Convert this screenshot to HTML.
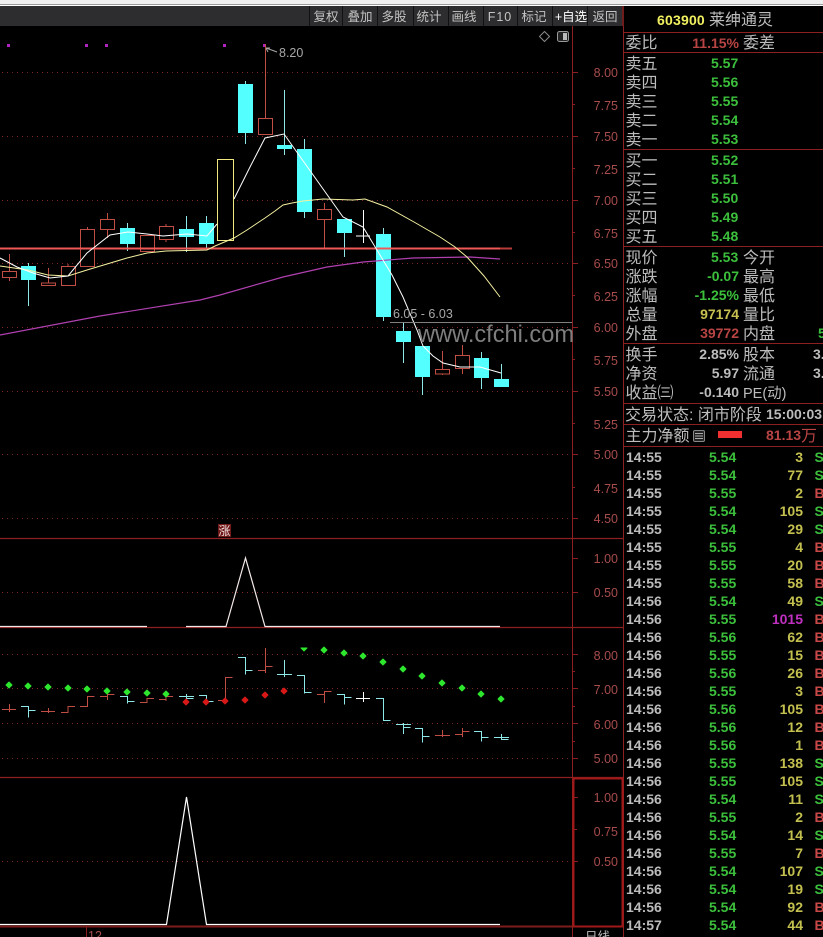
<!DOCTYPE html>
<html><head><meta charset="utf-8"><style>
html,body{margin:0;padding:0;background:#000;width:823px;height:937px;overflow:hidden}
svg{display:block}
text{font-family:"Liberation Sans","WenQuanYi Zen Hei","Noto Sans CJK SC",sans-serif}
.c{font-size:16px;fill:#bdbdbd}
.t{font-size:14px;fill:#c4c4c4;text-anchor:middle}
.ax{font-size:12.5px;fill:#a84c4c;text-anchor:end}
.g{font-size:14px;font-weight:bold;fill:#3cc03c}
.w{font-size:14px;font-weight:bold;fill:#bcbcbc}
.y{font-size:14px;font-weight:bold;fill:#c4c050;text-anchor:end}
.r{font-size:14px;font-weight:bold;fill:#b84444}
.s{font-size:14px;font-weight:bold;fill:#3cc03c}
.b{font-size:14px;font-weight:bold;fill:#c84848}
.dot{stroke:#7a2626;stroke-width:1;stroke-dasharray:1 4;fill:none}
.cy{fill:#54ffff}
.cw{stroke:#8fe8e8;stroke-width:1;fill:none}
.rb{fill:#000;stroke:#c04e44;stroke-width:1}
.rw{stroke:#c04e44;stroke-width:1;fill:none}
.ln{stroke:#8c2020;stroke-width:1;fill:none}
.bc{stroke:#8fe8e8;stroke-width:1;fill:none}
.br{stroke:#c04e44;stroke-width:1;fill:none}
</style></head><body>
<svg width="823" height="937" viewBox="0 0 823 937" xmlns="http://www.w3.org/2000/svg">
<rect width="823" height="937" fill="#000"/>
<rect width="823" height="4" fill="#efefef"/>
<rect y="4" width="823" height="1" fill="#9a9a9a"/>
<rect y="5" width="823" height="1" fill="#fff"/>
<rect y="6" width="623" height="20" fill="#2d2d2f"/>
<g fill="#111"><rect x="309" y="6" width="1" height="20"/><rect x="342" y="6" width="1" height="20"/><rect x="377" y="6" width="1" height="20"/><rect x="413" y="6" width="1" height="20"/><rect x="448" y="6" width="1" height="20"/><rect x="483" y="6" width="1" height="20"/><rect x="517" y="6" width="1" height="20"/><rect x="552" y="6" width="1" height="20"/><rect x="587" y="6" width="1" height="20"/></g>
<rect x="622" y="6" width="2" height="20" fill="#6e1c1c"/>
<g>
<text class="t" x="326" y="21" style="font-size:12.5px">复权</text>
<text class="t" x="360" y="21" style="font-size:12.5px">叠加</text>
<text class="t" x="394" y="21" style="font-size:12.5px">多股</text>
<text class="t" x="429" y="21" style="font-size:12.5px">统计</text>
<text class="t" x="464" y="21" style="font-size:12.5px">画线</text>
<text class="t" x="500" y="21" style="font-size:12.5px;letter-spacing:1px">F10</text>
<text class="t" x="534" y="21" style="font-size:12.5px">标记</text>
<text class="t" x="571" y="21" style="font-size:12.5px;fill:#fff">+自选</text>
<text class="t" x="605" y="21" style="font-size:12.5px">返回</text>
</g>
<!-- grid -->
<g class="dot">
<path d="M2 72.5H572M2 136.5H572M2 200.5H572M2 263.5H572M2 327.5H572M2 391.5H572M2 454.5H572M2 518.5H572"/>
<path d="M2 592.5H572"/>
<path d="M2 654.5H572M2 688.5H572M2 723.5H572M2 758.5H572"/>
<path d="M2 861.5H572"/>
</g>
<!-- axes -->
<path d="M572.5 26V937M623.5 26V937" stroke="#8c2020" stroke-width="1" fill="none"/>
<path d="M0 538.5H623M0 627.5H623M0 777.5H623" stroke="#8c2020" stroke-width="1.3"/>
<path d="M0 926.5H573" stroke="#7e1c1c" stroke-width="2"/>
<rect x="573.5" y="778.5" width="49" height="148" fill="none" stroke="#a01818" stroke-width="2"/>
<g stroke="#8c2020" stroke-width="1"><path d="M572 72.5h6M572 104.5h3M572 136.5h6M572 168.5h3M572 200.5h6M572 232.5h3M572 263.5h6M572 295.5h3M572 327.5h6M572 359.5h3M572 391.5h6M572 423.5h3M572 454.5h6M572 487.5h3M572 518.5h6M572 558.5h6M572 592.5h6M572 654.5h6M572 671.5h3M572 688.5h6M572 706.5h3M572 723.5h6M572 741.5h3M572 758.5h6M574 797.5h4M574 829.5h3M574 861.5h4"/></g>
<g>
<text class="ax" x="618" y="77">8.00</text><text class="ax" x="618" y="110">7.75</text><text class="ax" x="618" y="141">7.50</text><text class="ax" x="618" y="174">7.25</text><text class="ax" x="618" y="205">7.00</text><text class="ax" x="618" y="238">6.75</text><text class="ax" x="618" y="268">6.50</text><text class="ax" x="618" y="301">6.25</text><text class="ax" x="618" y="332">6.00</text><text class="ax" x="618" y="365">5.75</text><text class="ax" x="618" y="396">5.50</text><text class="ax" x="618" y="429">5.25</text><text class="ax" x="618" y="459">5.00</text><text class="ax" x="618" y="493">4.75</text><text class="ax" x="618" y="523">4.50</text>
<text class="ax" x="618" y="563">1.00</text><text class="ax" x="618" y="597">0.50</text>
<text class="ax" x="618" y="660">8.00</text><text class="ax" x="618" y="694">7.00</text><text class="ax" x="618" y="729">6.00</text><text class="ax" x="618" y="763">5.00</text>
<text class="ax" x="618" y="802">1.00</text><text class="ax" x="618" y="836">0.75</text><text class="ax" x="618" y="866">0.50</text>
</g>
<!-- top right icons -->
<path d="M544.5 31.5l5 5-5 5-5-5z" fill="none" stroke="#8a8a8a"/>
<rect x="557.5" y="31.5" width="11" height="10" rx="2" fill="#222" stroke="#9a9a9a"/><rect x="563" y="33" width="4" height="7" fill="#bbb"/>
<!-- magenta markers -->
<g fill="#b024c0"><rect x="7" y="44" width="3" height="3"/><rect x="85" y="44" width="3" height="3"/><rect x="105" y="44" width="3" height="3"/><rect x="223" y="44" width="3" height="3"/><rect x="263" y="44" width="3" height="3"/></g>
<path d="M266 48l11 4M266 48l4 0M266 48l2 4" stroke="#a8a8a8" fill="none"/>
<text x="279" y="57" style="font-size:12.5px;fill:#a8a8a8">8.20</text>
<!-- red level line + candles -->
<g class="cw">
<path d="M28.5 263V306M127.5 223V251M186.5 216V252M206.5 216V248M245.5 81V144M284.5 90V155M304.5 139V218M344.5 233V257M383.5 228V321M403.5 322V363M422.5 377V395M481.5 352V389M501.5 364V379"/>
</g>
<g class="rw">
<path d="M9.5 254V281M48.5 268V286M68 264V266M87.5 227V229M107.5 213V238M147 251V252M166 224V242M265.5 44V118M324.5 203V248M442.5 351V375M462.5 345V374"/>
</g>
<g class="rb">
<rect x="2.5" y="271.5" width="14" height="6"/><rect x="41.5" y="283" width="14" height="2.5"/><rect x="61.5" y="266.5" width="14" height="19"/><rect x="80.5" y="229.5" width="14" height="37"/><rect x="100.5" y="219.5" width="14" height="10"/><rect x="140.5" y="235.5" width="14" height="16"/><rect x="159.5" y="226.5" width="14" height="13"/><rect x="258.5" y="118.5" width="14" height="16"/><rect x="317.5" y="209.5" width="14" height="10"/><rect x="435.5" y="369.5" width="14" height="4.5"/><rect x="455.5" y="355.5" width="14" height="13"/>
</g>
<rect x="217.5" y="159.5" width="16" height="81" fill="#000" stroke="#f0e880"/>
<g class="cy">
<rect x="21" y="266" width="15" height="14"/><rect x="120" y="228" width="15" height="16"/><rect x="179" y="229" width="15" height="8"/><rect x="199" y="223" width="15" height="21"/><rect x="238" y="84" width="15" height="49"/><rect x="277" y="145" width="15" height="4"/><rect x="297" y="149" width="15" height="63"/><rect x="337" y="219" width="15" height="14"/><rect x="376" y="234" width="15" height="83"/><rect x="396" y="331" width="15" height="11"/><rect x="415" y="346" width="15" height="31"/><rect x="474" y="358" width="15" height="20"/><rect x="494" y="379" width="15" height="8"/>
</g>
<path d="M356 236h14M363.5 210V243" stroke="#fff" fill="none"/>
<path d="M0 248.5H500" stroke="#f05858" stroke-width="2"/><path d="M500 248.5H512" stroke="#b83a3a" stroke-width="2"/>
<!-- MAs -->
<path d="M0 335L100 316L200 300L220 295L283 277L327 267L363 262L413 258L470 257L500 259" fill="none" stroke="#b040b0" stroke-width="1.2"/>
<path d="M0 266L28 270L48 275L68 276L87 270L127 258L147 253L166 251L207 250L215 246L234 238L247 230L265 218L275 211L283 205L292 203L303 201L323 199L353 200L365 199L387 207L414 222L440 237L455 247L467 257L484 276L500 297" fill="none" stroke="#f4f0a0" stroke-width="1"/>
<path d="M0 258L17 267L33 273L50 278L68 276L87 253L110 235L128 232L147 234L163 236L187 234L207 236L217 224M234 199L250 167L265 138L284 134L343 217L363 227L377 250L392 275L403 297L417 330L423 346L433 356L443 363L460 367L480 367L501 373" fill="none" stroke="#fff" stroke-width="1"/>
<!-- range annotation -->
<path d="M390 322.5H572" stroke="#808080"/>
<text x="393" y="318" style="font-size:12.5px;fill:#a8a8a8">6.05 - 6.03</text>
<text x="418" y="342" style="font-size:23.6px;fill:#7e7e7e">www.cfchi.com</text>
<!-- zhang marker -->
<rect x="218" y="524" width="13" height="13" fill="#701818"/>
<text x="224.5" y="535" style="font-size:12px;fill:#f0e0e0;text-anchor:middle">涨</text>
<!-- pane 2 -->
<path d="M0 626.5H147M186 626.5H226L245.5 558L265 626.5H500" fill="none" stroke="#f4e8e8" stroke-width="1.2"/>
<!-- pane 3 bars -->
<g class="br">
<path d="M2 709.5h14M9.5 704v8M41 711.5h14M48.5 708v5M61 712.5h7v-6h7M80 706.5h7.5v-10h7M100 696.5h7.5v-2h7M107.5 694v6M140 702.5h7v-4h7M147 698v5M159 699.5h7v-3h7M166 696v5M218 700.5h7.5v-23h7M258 670.5h7.5M265.5 648v25M265.5 666.5h7M317 694.5h7.5M324.5 691v12M324.5 691.5h7M435 735.5h15M442.5 730v7M455 734.5h7.5M462.5 728v9M462.5 731.5h7"/>
</g>
<g class="bc">
<path d="M21 706.5h7.5v11M28.5 710.5h7M120 696.5h7.5v7M127.5 701.5h7M179 696.5h15M186.5 694v5M186.5 698.5h7M199 695.5h7.5v8M206.5 701.5h7M238 657.5h7.5v17M245.5 670.5h7M277 674.5h15M284.5 660v17M297 675.5h7.5v18M304.5 692.5h7M337 694.5h7.5v10M344.5 697.5h7M376 698.5h7.5v22h7M396 724.5h15M403.5 723v11M403.5 727.5h7M415 728.5h7.5v14M422.5 736.5h7M474 731.5h7.5v10M481.5 737.5h7M494 737.5h15M501.5 734v5.5h7"/>
</g>
<path d="M356 698.5h14M363.5 692v10" stroke="#fff" fill="none"/>
<g fill="#2ee62e" stroke="#2ee62e" stroke-width="1" stroke-linejoin="round">
<path d="M9 682l3 3-3 3-3-3zM28 683l3 3-3 3-3-3zM48 684l3 3-3 3-3-3zM68 685l3 3-3 3-3-3zM87 686l3 3-3 3-3-3zM107 688l3 3-3 3-3-3zM127 689l3 3-3 3-3-3zM147 690l3 3-3 3-3-3zM166 691l3 3-3 3-3-3z"/>
<path d="M301 648h6l-3 3zM324 647l3 3-3 3-3-3zM344 650l3 3-3 3-3-3zM363 653l3 3-3 3-3-3zM383 659l3 3-3 3-3-3zM403 666l3 3-3 3-3-3zM422 673l3 3-3 3-3-3zM442 680l3 3-3 3-3-3zM462 685l3 3-3 3-3-3zM481 691l3 3-3 3-3-3zM501 696l3 3-3 3-3-3z"/>
</g>
<g fill="#d81818" stroke="#d81818" stroke-width="1" stroke-linejoin="round">
<path d="M186 699l3 3-3 3-3-3zM206 699l3 3-3 3-3-3zM225 698l3 3-3 3-3-3zM245 697l3 3-3 3-3-3zM265 692l3 3-3 3-3-3zM284 688l3 3-3 3-3-3z"/>
</g>
<!-- pane 4 -->
<path d="M0 924.5H166.5L186.5 797L206.5 924.5H500" fill="none" stroke="#fff" stroke-width="1.2"/>
<path d="M86.5 927V937" stroke="#8c1c1c"/>
<text x="88" y="940" style="font-size:12.5px;fill:#a84c4c">12</text>
<text x="585" y="941" style="font-size:12.5px;fill:#bdbdbd">日线</text>
<!-- right panel lines -->
<g class="ln"><path d="M624 32.5H823M624 52.5H823M624 149.5H823M624 246.5H823M624 343.5H823M624 403.5H823M624 424.5H823M624 446.5H823"/></g>
<text x="657" y="25" style="font-size:14px;font-weight:bold;fill:#f0f060;letter-spacing:.2px">603900</text>
<text x="709" y="25" class="c">莱绅通灵</text>
<text x="625.5" y="48" class="c">委比</text>
<text x="739" y="48" class="r" style="text-anchor:end">11.15%</text>
<text x="743" y="48" class="c">委差</text>
<g class="c">
<text x="625.5" y="69">卖五</text><text x="625.5" y="88">卖四</text><text x="625.5" y="107">卖三</text><text x="625.5" y="126">卖二</text><text x="625.5" y="145">卖一</text>
<text x="625.5" y="166">买一</text><text x="625.5" y="185">买二</text><text x="625.5" y="204">买三</text><text x="625.5" y="223">买四</text><text x="625.5" y="242">买五</text>
<text x="625.5" y="263">现价</text><text x="625.5" y="282">涨跌</text><text x="625.5" y="301">涨幅</text><text x="625.5" y="320">总量</text><text x="625.5" y="339">外盘</text>
<text x="743" y="263">今开</text><text x="743" y="282">最高</text><text x="743" y="301">最低</text><text x="743" y="320">量比</text><text x="743" y="339">内盘</text>
<text x="625.5" y="360">换手</text><text x="625.5" y="379">净资</text><text x="625.5" y="398">收益㈢</text>
<text x="743" y="360">股本</text><text x="743" y="379">流通</text><text x="743" y="398" style="font-size:14.5px">PE(动)</text>
<text x="625" y="420">交易状态: 闭市阶段</text>
<text x="625.5" y="441">主力净额</text>
</g>
<g class="g">
<text x="711" y="68">5.57</text><text x="711" y="87">5.56</text><text x="711" y="106">5.55</text><text x="711" y="125">5.54</text><text x="711" y="144">5.53</text>
<text x="711" y="165">5.52</text><text x="711" y="184">5.51</text><text x="711" y="203">5.50</text><text x="711" y="222">5.49</text><text x="711" y="241">5.48</text>
<text x="711" y="262">5.53</text>
<text x="739" y="281" text-anchor="end">-0.07</text><text x="739" y="300" text-anchor="end">-1.25%</text>
<text x="818" y="338">5</text>
</g>
<text x="739" y="319" class="y" style="fill:#c8c050">97174</text>
<text x="739" y="338" class="r" style="text-anchor:end">39772</text>
<g class="w">
<text x="739" y="359" text-anchor="end">2.85%</text><text x="739" y="378" text-anchor="end">5.97</text><text x="739" y="397" text-anchor="end">-0.140</text>
</g>
<text x="813" y="359" class="w">3.</text><text x="813" y="378" class="w">3.</text>
<text x="766" y="419" class="w">15:00:03</text>
<rect x="693.5" y="430.5" width="11" height="11" rx="1.5" fill="#222" stroke="#888"/><path d="M695 433.5h8M695 436h8M695 438.5h8" stroke="#aaa"/>
<rect x="718" y="431" width="24" height="7" fill="#f03030"/>
<text x="766" y="440" class="r">81.13</text><text x="801" y="441" class="c" style="fill:#b84444">万</text>
<!-- ticks -->
<g class="w">
<text x="626" y="462">14:55</text><text x="626" y="480">14:55</text><text x="626" y="498">14:55</text><text x="626" y="516">14:55</text><text x="626" y="534">14:55</text><text x="626" y="552">14:55</text><text x="626" y="570">14:55</text><text x="626" y="588">14:55</text><text x="626" y="606">14:56</text><text x="626" y="624">14:56</text><text x="626" y="642">14:56</text><text x="626" y="660">14:56</text><text x="626" y="678">14:56</text><text x="626" y="696">14:56</text><text x="626" y="714">14:56</text><text x="626" y="732">14:56</text><text x="626" y="750">14:56</text><text x="626" y="768">14:56</text><text x="626" y="786">14:56</text><text x="626" y="804">14:56</text><text x="626" y="822">14:56</text><text x="626" y="840">14:56</text><text x="626" y="858">14:56</text><text x="626" y="876">14:56</text><text x="626" y="894">14:56</text><text x="626" y="912">14:56</text><text x="626" y="930">14:57</text>
</g>
<g class="g">
<text x="709" y="462">5.54</text><text x="709" y="480">5.54</text><text x="709" y="498">5.55</text><text x="709" y="516">5.54</text><text x="709" y="534">5.54</text><text x="709" y="552">5.55</text><text x="709" y="570">5.55</text><text x="709" y="588">5.55</text><text x="709" y="606">5.54</text><text x="709" y="624">5.55</text><text x="709" y="642">5.56</text><text x="709" y="660">5.55</text><text x="709" y="678">5.56</text><text x="709" y="696">5.55</text><text x="709" y="714">5.56</text><text x="709" y="732">5.56</text><text x="709" y="750">5.56</text><text x="709" y="768">5.55</text><text x="709" y="786">5.55</text><text x="709" y="804">5.54</text><text x="709" y="822">5.55</text><text x="709" y="840">5.54</text><text x="709" y="858">5.55</text><text x="709" y="876">5.54</text><text x="709" y="894">5.54</text><text x="709" y="912">5.54</text><text x="709" y="930">5.54</text>
</g>
<g class="y">
<text x="803" y="462">3</text><text x="803" y="480">77</text><text x="803" y="498">2</text><text x="803" y="516">105</text><text x="803" y="534">29</text><text x="803" y="552">4</text><text x="803" y="570">20</text><text x="803" y="588">58</text><text x="803" y="606">49</text><text x="803" y="624" style="fill:#c030c0">1015</text><text x="803" y="642">62</text><text x="803" y="660">15</text><text x="803" y="678">26</text><text x="803" y="696">3</text><text x="803" y="714">105</text><text x="803" y="732">12</text><text x="803" y="750">1</text><text x="803" y="768">138</text><text x="803" y="786">105</text><text x="803" y="804">11</text><text x="803" y="822">2</text><text x="803" y="840">14</text><text x="803" y="858">7</text><text x="803" y="876">107</text><text x="803" y="894">19</text><text x="803" y="912">92</text><text x="803" y="930">44</text>
</g>
<g>
<text class="s" x="814.5" y="462">S</text><text class="s" x="814.5" y="480">S</text><text class="b" x="814.5" y="498">B</text><text class="s" x="814.5" y="516">S</text><text class="s" x="814.5" y="534">S</text><text class="b" x="814.5" y="552">B</text><text class="b" x="814.5" y="570">B</text><text class="b" x="814.5" y="588">B</text><text class="s" x="814.5" y="606">S</text><text class="b" x="814.5" y="624">B</text><text class="b" x="814.5" y="642">B</text><text class="b" x="814.5" y="660">B</text><text class="b" x="814.5" y="678">B</text><text class="b" x="814.5" y="696">B</text><text class="b" x="814.5" y="714">B</text><text class="b" x="814.5" y="732">B</text><text class="b" x="814.5" y="750">B</text><text class="s" x="814.5" y="768">S</text><text class="s" x="814.5" y="786">S</text><text class="s" x="814.5" y="804">S</text><text class="b" x="814.5" y="822">B</text><text class="s" x="814.5" y="840">S</text><text class="b" x="814.5" y="858">B</text><text class="s" x="814.5" y="876">S</text><text class="s" x="814.5" y="894">S</text><text class="b" x="814.5" y="912">B</text><text class="b" x="814.5" y="930">B</text>
</g>
</svg>
</body></html>
